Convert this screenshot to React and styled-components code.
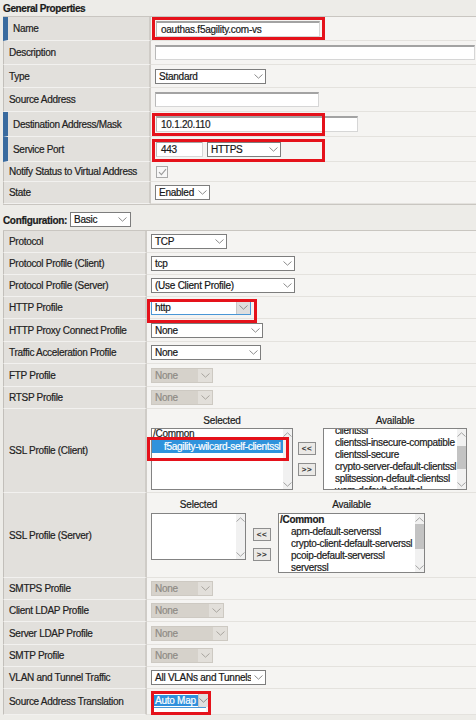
import React from 'react';
import styled, { createGlobalStyle } from 'styled-components';

const GlobalStyle = createGlobalStyle`
  * { box-sizing: border-box; }
  html, body {
    margin: 0;
    padding: 0;
    background: #edece8;
  }
  body {
    font-family: "Liberation Sans", Arial, sans-serif;
    font-size: 10px;
    color: #1b1b1b;
    -webkit-text-stroke: 0.2px currentColor;
  }
`;

const Page = styled.div`
  width: 476px;
  height: 720px;
  overflow: hidden;
  background: #edece8;
`;

const SectionTitle = styled.div`
  height: 16px;
  padding-left: 3px;
  display: flex;
  align-items: center;
  font-weight: bold;
  letter-spacing: -0.4px;
`;

const Table = styled.div`
  margin-left: 3px;
  border-top: 1px solid #c9c6c1;
  border-bottom: 1px solid #c9c6c1;
`;

const Row = styled.div`
  display: grid;
  grid-template-columns: ${(p) => p.$lw}px 1fr;
  height: ${(p) => p.$h}px;
`;

const Label = styled.div`
  display: flex;
  align-items: center;
  background: #e2e0dc;
  border-left: ${(p) => (p.$req ? '5px solid #3a6b9f' : '1px solid #c2bfba')};
  border-right: 2px solid #cfccc7;
  border-bottom: 1px solid #f2f1ef;
  padding-left: 5px;
  letter-spacing: -0.3px;
  white-space: nowrap;
  color: #222;
`;

const Value = styled.div`
  position: relative;
  display: flex;
  align-items: ${(p) => (p.$top ? 'flex-start' : 'center')};
  gap: 4px;
  padding-left: 4px;
  padding-top: ${(p) => p.$pt || 0}px;
  background: #f5f4f2;
  border-bottom: 1px solid #e4e2de;
`;

// cadre rouge d'annotation posé par-dessus les champs
const Mark = styled.div`
  position: absolute;
  left: ${(p) => p.$l}px;
  top: ${(p) => p.$t}px;
  width: ${(p) => p.$w}px;
  height: ${(p) => p.$h}px;
  border: 3px solid #e5121b;
  pointer-events: none;
  z-index: 2;
`;

const TextInput = styled.div`
  flex-shrink: 0;
  width: ${(p) => p.$w}px;
  height: ${(p) => p.$h || 15}px;
  margin-left: ${(p) => p.$ml || 0}px;
  display: flex;
  align-items: center;
  padding-left: 4px;
  background: #fff;
  border: 1px solid #d6d6d6;
  border-top: 2px solid #a3a3a3;
  border-left-color: #b9b9b9;
  letter-spacing: -0.25px;
  white-space: nowrap;
`;

const SelectBox = styled.div`
  flex-shrink: 0;
  display: inline-flex;
  align-items: stretch;
  width: ${(p) => p.$w}px;
  height: 15px;
  border: 1px solid ${(p) => (p.$focus ? '#4a97d6' : p.$disabled ? '#cdc9c2' : '#7d7d7d')};
  background: ${(p) => (p.$disabled ? '#d6d2cb' : '#fff')};
  color: ${(p) => (p.$disabled ? '#8f8b85' : '#161616')};
`;

const SelectText = styled.span`
  flex: 1;
  display: flex;
  align-items: center;
  padding-left: 3px;
  overflow: hidden;
  white-space: nowrap;
  letter-spacing: -0.25px;
`;

const SelectHl = styled.span`
  display: flex;
  align-items: center;
  margin: 1px auto 1px 1px;
  padding: 0 2px;
  background: #2f8fdc;
  color: #fff;
  white-space: nowrap;
  letter-spacing: -0.25px;
`;

const SelectArrow = styled.span`
  width: ${(p) => p.$aw || 14}px;
  display: flex;
  align-items: center;
  justify-content: center;
  background: ${(p) => p.$shade || 'transparent'};
  border-left: ${(p) => (p.$line ? '1px solid #c7c7c7' : 'none')};
`;

const AutoMapWrap = styled.div`
  display: flex;
  flex-direction: column;
`;

const DropStrip = styled.div`
  width: 55px;
  height: 6px;
  background: #fff;
`;

const Checkbox = styled.div`
  width: 12px;
  height: 12px;
  margin-left: 1px;
  border: 1px solid #a9a9a9;
  background: #f7f7f7;
  display: flex;
  align-items: center;
  justify-content: center;
`;

const ConfigLine = styled.div`
  display: flex;
  align-items: flex-end;
  gap: 3px;
  height: 15px;
  margin: 7px 0 3px 3px;
`;

const ConfigLabel = styled.span`
  font-weight: bold;
  letter-spacing: -0.35px;
  line-height: 12px;
`;

const Dual = styled.div`
  display: flex;
  align-items: flex-start;
`;

const ListCol = styled.div`
  width: ${(p) => p.$w}px;
  display: flex;
  flex-direction: column;
`;

const ListHead = styled.div`
  height: ${(p) => p.$hh}px;
  line-height: 12px;
  text-align: center;
  letter-spacing: -0.2px;
`;

const ListBox = styled.div`
  height: ${(p) => p.$h}px;
  display: flex;
  background: #fff;
  border: 1px solid #838383;
  overflow: hidden;
`;

const ListItems = styled.div`
  flex: 1;
  overflow: hidden;
  margin-top: ${(p) => p.$mt}px;
`;

const ListItem = styled.div`
  height: ${(p) => p.$lh}px;
  line-height: ${(p) => p.$lh}px;
  padding-left: ${(p) => p.$indent}px;
  white-space: nowrap;
  letter-spacing: -0.3px;
  font-weight: ${(p) => (p.$bold ? 'bold' : 'normal')};
  background: ${(p) => (p.$sel ? '#2f93dc' : 'transparent')};
  color: ${(p) => (p.$sel ? '#fff' : '#1b1b1b')};
`;

const ScrollBar = styled.div`
  width: 9px;
  display: flex;
  flex-direction: column;
  background: #f1f1f1;
`;

const ScrollArrow = styled.div`
  height: 10px;
  display: flex;
  align-items: center;
  justify-content: center;
`;

const ScrollTrack = styled.div`
  flex: 1;
  padding-top: ${(p) => p.$off}px;
`;

const ScrollThumb = styled.div`
  height: ${(p) => p.$len}px;
  background: #c3c3c3;
`;

const MoveCol = styled.div`
  display: flex;
  flex-direction: column;
  gap: ${(p) => p.$gap}px;
  padding-top: ${(p) => p.$top}px;
  margin: 0 ${(p) => p.$mr}px 0 ${(p) => p.$ml}px;
`;

const MoveBtn = styled.div`
  width: 18px;
  height: 13px;
  display: flex;
  align-items: center;
  justify-content: center;
  border: 1px solid #8e8e8e;
  background: #ebe9e6;
  font-size: 8px;
  letter-spacing: 0.6px;
  color: #222;
`;

const Chevron = ({ up, color = '#8c8c8c' }) => (
  <svg width="9" height="5" viewBox="0 0 9 5">
    <path
      d={up ? 'M0.5 4.5 L4.5 0.8 L8.5 4.5' : 'M0.5 0.5 L4.5 4.2 L8.5 0.5'}
      fill="none"
      stroke={color}
      strokeWidth="1"
    />
  </svg>
);

const Select = ({ w, children, disabled }) => (
  <SelectBox $w={w} $disabled={disabled}>
    <SelectText>{children}</SelectText>
    <SelectArrow $shade={disabled ? '#e2dfda' : undefined}>
      <Chevron color={disabled ? '#a8a49e' : '#8c8c8c'} />
    </SelectArrow>
  </SelectBox>
);

const Scroll = ({ off, len }) => (
  <ScrollBar>
    <ScrollArrow>
      <Chevron up color="#a3a3a3" />
    </ScrollArrow>
    <ScrollTrack $off={off}>{len ? <ScrollThumb $len={len} /> : null}</ScrollTrack>
    <ScrollArrow>
      <Chevron color="#a3a3a3" />
    </ScrollArrow>
  </ScrollBar>
);

const simpleRows = [
  { label: 'Protocol', h: 22, w: 76, v: 'TCP' },
  { label: 'Protocol Profile (Client)', h: 22, w: 144, v: 'tcp' },
  { label: 'Protocol Profile (Server)', h: 22, w: 144, v: '(Use Client Profile)' },
];

const midRows = [
  { label: 'HTTP Proxy Connect Profile', h: 23, w: 112, v: 'None' },
  { label: 'Traffic Acceleration Profile', h: 22, w: 110, v: 'None' },
  { label: 'FTP Profile', h: 23, w: 62, v: 'None', disabled: true },
  { label: 'RTSP Profile', h: 22, w: 62, v: 'None', disabled: true },
];

const lowRows = [
  { label: 'SMTPS Profile', h: 22, w: 62, v: 'None', disabled: true },
  { label: 'Client LDAP Profile', h: 22, w: 73, v: 'None', disabled: true },
  { label: 'Server LDAP Profile', h: 23, w: 77, v: 'None', disabled: true },
  { label: 'SMTP Profile', h: 22, w: 62, v: 'None', disabled: true },
  { label: 'VLAN and Tunnel Traffic', h: 22, w: 115, v: 'All VLANs and Tunnels' },
];

const clientAvailable = [
  'clientssl',
  'clientssl-insecure-compatible',
  'clientssl-secure',
  'crypto-server-default-clientssl',
  'splitsession-default-clientssl',
  'wom-default-clientssl',
];

const serverAvailable = [
  'apm-default-serverssl',
  'crypto-client-default-serverssl',
  'pcoip-default-serverssl',
  'serverssl',
];

const PlainRow = ({ r }) => (
  <Row $lw={144} $h={r.h}>
    <Label>{r.label}</Label>
    <Value>
      <Select w={r.w} disabled={r.disabled}>
        {r.v}
      </Select>
    </Value>
  </Row>
);

export default function App() {
  return (
    <Page>
      <GlobalStyle />
      <SectionTitle>General Properties</SectionTitle>
      <Table>
        <Row $lw={148} $h={24}>
          <Label $req>Name</Label>
          <Value>
            <TextInput $w={164} $h={16} $ml={1}>
              oauthas.f5agility.com-vs
            </TextInput>
            <Mark $l={1} $t={0} $w={173} $h={23} />
          </Value>
        </Row>
        <Row $lw={148} $h={24}>
          <Label>Description</Label>
          <Value>
            <TextInput $w={320} />
          </Value>
        </Row>
        <Row $lw={148} $h={23}>
          <Label>Type</Label>
          <Value>
            <Select w={111}>Standard</Select>
          </Value>
        </Row>
        <Row $lw={148} $h={24}>
          <Label>Source Address</Label>
          <Value>
            <TextInput $w={164} />
          </Value>
        </Row>
        <Row $lw={148} $h={25}>
          <Label $req>Destination Address/Mask</Label>
          <Value>
            <TextInput $w={202} $h={16} $ml={1}>
              10.1.20.110
            </TextInput>
            <Mark $l={1} $t={1} $w={173} $h={23} />
          </Value>
        </Row>
        <Row $lw={148} $h={25}>
          <Label $req>Service Port</Label>
          <Value>
            <TextInput $w={47} $h={16} $ml={1}>
              443
            </TextInput>
            <Select w={74}>HTTPS</Select>
            <Mark $l={1} $t={2} $w={173} $h={23} />
          </Value>
        </Row>
        <Row $lw={148} $h={20}>
          <Label>Notify Status to Virtual Address</Label>
          <Value>
            <Checkbox>
              <svg width="9" height="8" viewBox="0 0 9 8">
                <path d="M1 4.2 L3.4 6.6 L8 1.2" fill="none" stroke="#9c9c9c" strokeWidth="1.1" />
              </svg>
            </Checkbox>
          </Value>
        </Row>
        <Row $lw={148} $h={22}>
          <Label>State</Label>
          <Value>
            <Select w={55}>Enabled</Select>
          </Value>
        </Row>
      </Table>

      <ConfigLine>
        <ConfigLabel>Configuration:</ConfigLabel>
        <Select w={61}>Basic</Select>
      </ConfigLine>

      <Table>
        {simpleRows.map((r) => (
          <PlainRow key={r.label} r={r} />
        ))}
        <Row $lw={144} $h={22}>
          <Label>HTTP Profile</Label>
          <Value>
            <SelectBox $w={100} $focus>
              <SelectText>http</SelectText>
              <SelectArrow $shade="#dedede" $line>
                <Chevron />
              </SelectArrow>
            </SelectBox>
            <Mark $l={0} $t={2} $w={110} $h={24} />
          </Value>
        </Row>
        {midRows.map((r) => (
          <PlainRow key={r.label} r={r} />
        ))}
        <Row $lw={144} $h={84}>
          <Label>SSL Profile (Client)</Label>
          <Value $top $pt={6}>
            <Dual>
              <ListCol $w={142}>
                <ListHead $hh={13}>Selected</ListHead>
                <ListBox $h={62}>
                  <ListItems $mt={-2}>
                    <ListItem $lh={13} $indent={1}>/Common</ListItem>
                    <ListItem $lh={13} $indent={12} $sel>
                      f5agility-wilcard-self-clientssl
                    </ListItem>
                  </ListItems>
                  <Scroll />
                </ListBox>
              </ListCol>
              <MoveCol $top={27} $gap={8} $ml={5} $mr={7}>
                <MoveBtn>&lt;&lt;</MoveBtn>
                <MoveBtn>&gt;&gt;</MoveBtn>
              </MoveCol>
              <ListCol $w={144}>
                <ListHead $hh={13}>Available</ListHead>
                <ListBox $h={62}>
                  <ListItems $mt={-4}>
                    {clientAvailable.map((n) => (
                      <ListItem key={n} $lh={12} $indent={11}>
                        {n}
                      </ListItem>
                    ))}
                  </ListItems>
                  <Scroll off={7} len={23} />
                </ListBox>
              </ListCol>
            </Dual>
            <Mark $l={0} $t={28} $w={142} $h={24} />
          </Value>
        </Row>
        <Row $lw={144} $h={85}>
          <Label>SSL Profile (Server)</Label>
          <Value $top $pt={6}>
            <Dual>
              <ListCol $w={95}>
                <ListHead $hh={14}>Selected</ListHead>
                <ListBox $h={47}>
                  <ListItems $mt={0} />
                  <Scroll />
                </ListBox>
              </ListCol>
              <MoveCol $top={29} $gap={7} $ml={7} $mr={7}>
                <MoveBtn>&lt;&lt;</MoveBtn>
                <MoveBtn>&gt;&gt;</MoveBtn>
              </MoveCol>
              <ListCol $w={147}>
                <ListHead $hh={14}>Available</ListHead>
                <ListBox $h={60}>
                  <ListItems $mt={0}>
                    <ListItem $lh={12} $indent={1} $bold>
                      /Common
                    </ListItem>
                    {serverAvailable.map((n) => (
                      <ListItem key={n} $lh={12} $indent={12}>
                        {n}
                      </ListItem>
                    ))}
                  </ListItems>
                  <Scroll off={0} len={25} />
                </ListBox>
              </ListCol>
            </Dual>
          </Value>
        </Row>
        {lowRows.map((r) => (
          <PlainRow key={r.label} r={r} />
        ))}
        <Row $lw={144} $h={24}>
          <Label>Source Address Translation</Label>
          <Value $top $pt={4}>
            <AutoMapWrap>
              <SelectBox $w={55} $focus>
                <SelectHl>Auto Map</SelectHl>
                <SelectArrow $aw={12} $shade="#dedede" $line>
                  <Chevron />
                </SelectArrow>
              </SelectBox>
              <DropStrip />
            </AutoMapWrap>
            <Mark $l={4} $t={2} $w={60} $h={24} />
          </Value>
        </Row>
      </Table>
    </Page>
  );
}
